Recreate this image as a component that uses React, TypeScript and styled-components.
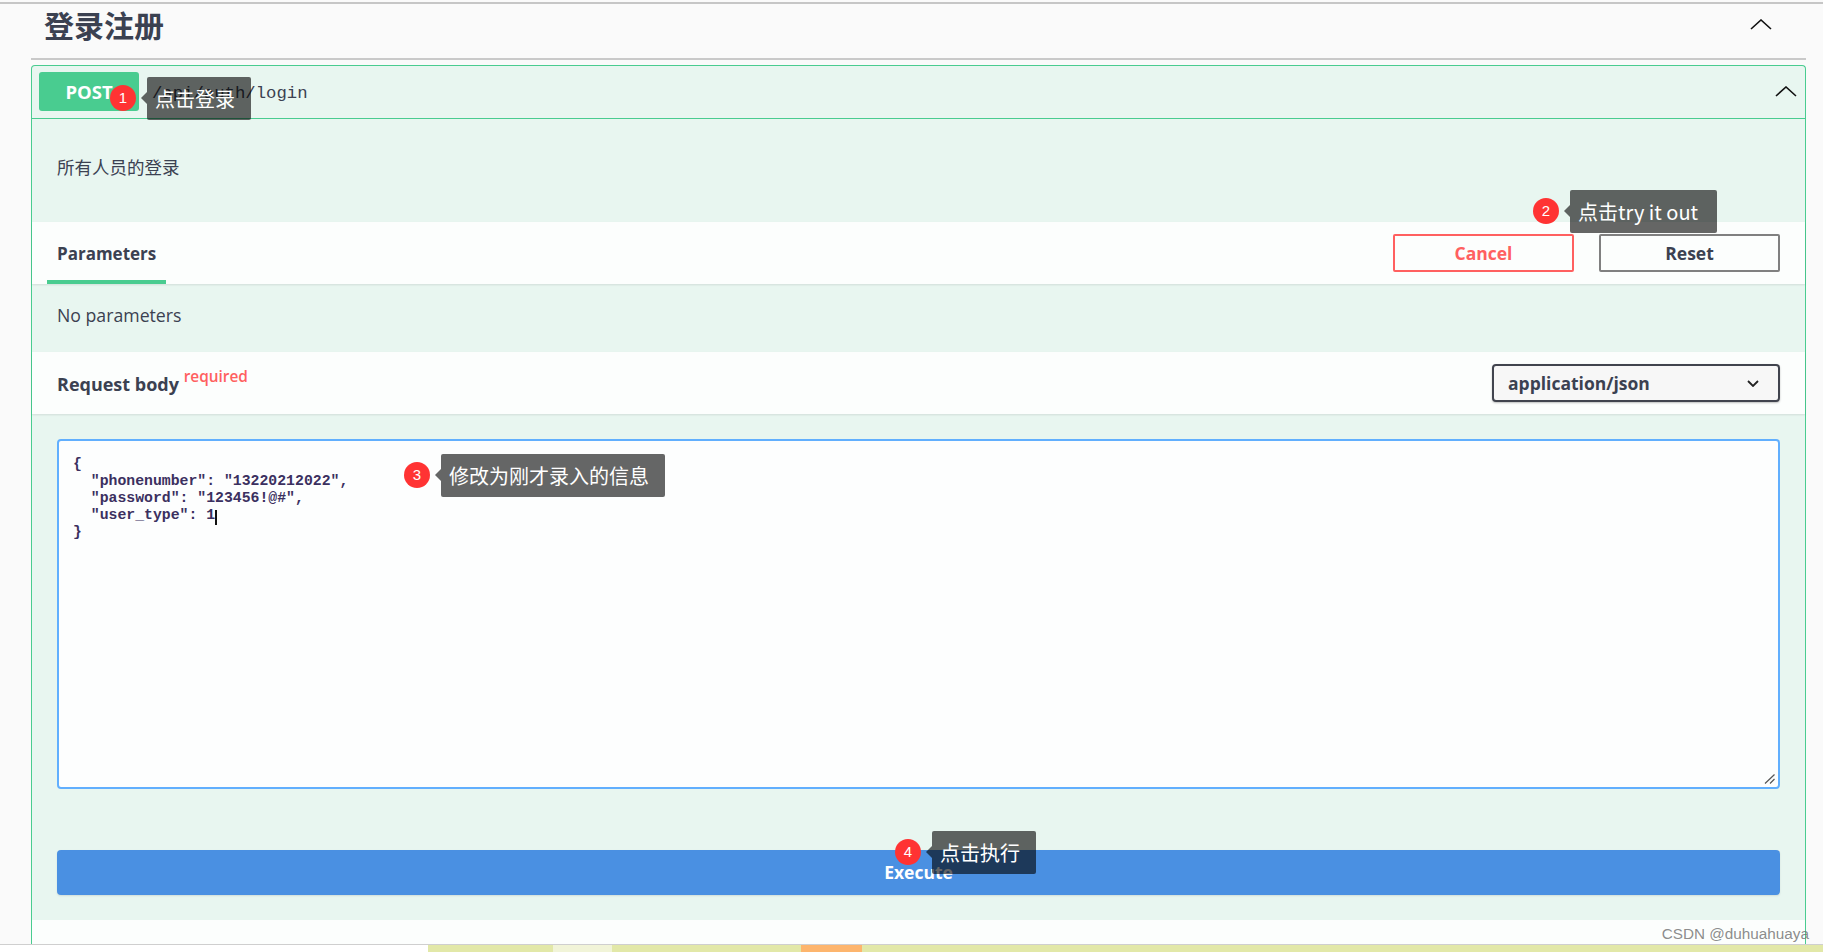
import styled, { createGlobalStyle } from 'styled-components';

const GlobalStyle = createGlobalStyle`
  html, body {
    margin: 0;
    padding: 0;
    background: #fafafa;
  }
  body {
    font-family: 'Open Sans', 'Noto Sans CJK SC', sans-serif;
    color: #3b4151;
    overflow: hidden;
  }
`;

const notes = [
  { n: 1, text: '点击登录', left: 147, top: 77, width: 104, badgeX: 123, badgeY: 98 },
  { n: 2, text: '点击try it out', left: 1570, top: 190, width: 147, badgeX: 1546, badgeY: 211 },
  { n: 3, text: '修改为刚才录入的信息', left: 441, top: 454, width: 224, badgeX: 417, badgeY: 475 },
  { n: 4, text: '点击执行', left: 932, top: 831, width: 104, badgeX: 908, badgeY: 852 },
];

const body = `{
  "phonenumber": "13220212022",
  "password": "123456!@#",
  "user_type": 1
}`;

const Chevron = ({ width, height, weight }: { width: number; height: number; weight: number }) => (
  <svg width={width} height={height} viewBox={`0 0 ${width} ${height}`} fill='none'>
    <polyline
      points={`1,${height - 1} ${width / 2},1 ${width - 1},${height - 1}`}
      stroke='#111'
      strokeWidth={weight}
    />
  </svg>
);

const App = () => {
  return (
    <Page>
      <GlobalStyle />
      <Main>
        <Section>
          <SectionTitle>登录注册</SectionTitle>
          <Chevron width={22} height={11} weight={1.6} />
        </Section>
        <Opblock>
          <Summary>
            <Method>POST</Method>
            <Path>/api/auth/login</Path>
            <Chevron width={22} height={11} weight={1.6} />
          </Summary>
          <Description>所有人员的登录</Description>
          <TabBar>
            <Tab>Parameters</Tab>
            <Actions>
              <OutlineButton $danger>Cancel</OutlineButton>
              <OutlineButton>Reset</OutlineButton>
            </Actions>
          </TabBar>
          <NoParams>No parameters</NoParams>
          <BodyBar>
            <BodyTitle>
              Request body <Required>required</Required>
            </BodyTitle>
            <MediaSelect>
              application/json
              <SelectArrow width='12' height='7' viewBox='0 0 12 7' fill='none'>
                <polyline points='1,1 6,6 11,1' stroke='#222' strokeWidth='1.8' />
              </SelectArrow>
            </MediaSelect>
          </BodyBar>
          <Editor>
            <EditorBox>
              <BodyInput readOnly spellCheck={false} defaultValue={body} />
              <Caret />
              <Grip width='11' height='10' viewBox='0 0 11 10' fill='none'>
                <path d='M1 9.5 L10.5 0.5 M6 9.5 L10.5 5' stroke='#555' strokeWidth='1.2' />
              </Grip>
            </EditorBox>
            <Execute>Execute</Execute>
          </Editor>
          <Footer />
        </Opblock>
      </Main>
      <Strip>
        <StripBlank />
        <StripPart $w={125} $color='#e2e8a8' />
        <StripPart $w={59} $color='#f1f4d8' />
        <StripPart $w={189} $color='#e2e8a8' />
        <StripPart $w={61} $color='#fdb56d' />
        <StripPart $grow $color='#e2e8a8' />
      </Strip>
      {notes.map((note) => (
        <div key={note.n}>
          <Badge $x={note.badgeX} $y={note.badgeY}>
            {note.n}
          </Badge>
          <Note $x={note.left} $y={note.top} $w={note.width}>
            {note.text}
          </Note>
        </div>
      ))}
      <Watermark>CSDN @duhuahuaya</Watermark>
    </Page>
  );
};

export default App;

const Page = styled.div`
  position: relative;
  display: flex;
  flex-direction: column;
  height: 952px;
  overflow: hidden;
  background: #fafafa;
`;

const Main = styled.div`
  flex: 1;
  min-height: 0;
  overflow: hidden;
  margin-top: 2px;
  border-top: 2px solid #c6c6c6;
  padding: 0 17px 0 31px;
`;

const Section = styled.div`
  display: flex;
  align-items: center;
  justify-content: space-between;
  box-sizing: border-box;
  height: 56px;
  padding: 0 34px 14px 13px;
  border-bottom: 2px solid #c9c9c9;
`;

const SectionTitle = styled.h3`
  margin: 0;
  padding-top: 4px;
  font-size: 30px;
  font-weight: 700;
  line-height: 36px;
  color: #3b4151;
`;

const Opblock = styled.div`
  margin-top: 5px;
  border: 1px solid #49cc90;
  border-bottom: 0;
  border-radius: 4px 4px 0 0;
  background: #e8f6f0;
  height: 900px;
`;

const Summary = styled.div`
  display: flex;
  align-items: center;
  box-sizing: border-box;
  height: 53px;
  padding: 0 8px 1px 7px;
  border-bottom: 1px solid #49cc90;
`;

const Method = styled.div`
  box-sizing: border-box;
  width: 100px;
  height: 39px;
  border-radius: 3px;
  background: #49cc90;
  color: #fff;
  font-size: 18.5px;
  font-weight: 700;
  line-height: 39px;
  text-align: center;
`;

const Path = styled.div`
  flex: 1;
  padding: 3px 0 0 13px;
  font-family: 'Liberation Mono', monospace;
  font-size: 17.3px;
  color: #3b4151;
`;

const Description = styled.div`
  box-sizing: border-box;
  height: 103px;
  padding: 35px 0 0 25px;
  font-size: 17.5px;
  line-height: 26px;
  color: #3b4151;
`;

const TabBar = styled.div`
  display: flex;
  align-items: center;
  justify-content: space-between;
  box-sizing: border-box;
  height: 62px;
  padding: 0 25px 0 15px;
  background: rgba(255, 255, 255, 0.85);
  box-shadow: 0 1px 2px rgba(0, 0, 0, 0.1);
`;

const Tab = styled.div`
  box-sizing: border-box;
  align-self: stretch;
  width: 119px;
  padding: 20px 0 0 10px;
  border-bottom: 4px solid #49cc90;
  font-size: 17px;
  font-weight: 700;
  line-height: 24px;
`;

const Actions = styled.div`
  display: flex;
  gap: 25px;
`;

const OutlineButton = styled.div<{ $danger?: boolean }>`
  box-sizing: border-box;
  width: 181px;
  height: 38px;
  border: 2px solid ${(p) => (p.$danger ? '#ff6060' : '#808080')};
  border-radius: 2px;
  color: ${(p) => (p.$danger ? '#ff6060' : '#3b4151')};
  font-size: 17.5px;
  font-weight: 700;
  line-height: 34px;
  text-align: center;
`;

const NoParams = styled.div`
  box-sizing: border-box;
  height: 68px;
  padding: 18px 0 0 25px;
  font-size: 17.7px;
  line-height: 26px;
`;

const BodyBar = styled.div`
  display: flex;
  align-items: center;
  justify-content: space-between;
  box-sizing: border-box;
  height: 62px;
  padding: 0 25px;
  background: rgba(255, 255, 255, 0.85);
  box-shadow: 0 1px 2px rgba(0, 0, 0, 0.1);
`;

const BodyTitle = styled.div`
  padding-bottom: 2px;
  font-size: 18px;
  font-weight: 700;
`;

const Required = styled.sup`
  font-size: 15.4px;
  font-weight: 600;
  line-height: 1;
  vertical-align: 9px;
  color: #ff6060;
`;

const MediaSelect = styled.div`
  display: flex;
  align-items: center;
  justify-content: space-between;
  box-sizing: border-box;
  width: 288px;
  height: 38px;
  padding: 0 19px 0 14px;
  border: 2px solid #41444e;
  border-radius: 4px;
  background: #f7f7f7;
  box-shadow: 0 1px 2px rgba(0, 0, 0, 0.25);
  font-size: 17.5px;
  font-weight: 700;
`;

const SelectArrow = styled.svg`
  display: block;
`;

const Editor = styled.div`
  box-sizing: border-box;
  height: 506px;
  padding: 25px 25px 0;
`;

const EditorBox = styled.div`
  position: relative;
`;

const BodyInput = styled.textarea`
  display: block;
  box-sizing: border-box;
  width: 100%;
  height: 350px;
  padding: 15px 14px;
  border: 2px solid #61affe;
  border-radius: 4px;
  outline: none;
  background: #fdfefe;
  color: #3b3060;
  font-family: 'Liberation Mono', monospace;
  font-size: 14.8px;
  font-weight: 700;
  line-height: 17px;
  resize: none;
`;

const Caret = styled.span`
  position: absolute;
  left: 158px;
  top: 71px;
  width: 1.5px;
  height: 15px;
  background: #111;
`;

const Grip = styled.svg`
  position: absolute;
  right: 5px;
  bottom: 5px;
`;

const Execute = styled.div`
  height: 45px;
  margin-top: 61px;
  border-radius: 4px;
  background: #4a90e2;
  box-shadow: 0 1px 2px rgba(0, 0, 0, 0.1);
  color: #fff;
  font-size: 17.5px;
  font-weight: 700;
  line-height: 45px;
  text-align: center;
`;

const Footer = styled.div`
  height: 40px;
  background: #fcfefd;
`;

const Strip = styled.div`
  display: flex;
  height: 8px;
  border-top: 1px solid #cfcfcf;
  box-sizing: border-box;
`;

const StripBlank = styled.div`
  width: 428px;
  background: #fff;
`;

const StripPart = styled.div<{ $w?: number; $grow?: boolean; $color: string }>`
  width: ${(p) => (p.$w ? `${p.$w}px` : 'auto')};
  flex: ${(p) => (p.$grow ? 1 : 'none')};
  background: ${(p) => p.$color};
`;

const Badge = styled.div<{ $x: number; $y: number }>`
  position: absolute;
  left: ${(p) => p.$x - 13}px;
  top: ${(p) => p.$y - 13}px;
  width: 26px;
  height: 26px;
  border-radius: 50%;
  background: #ff3333;
  color: #fff;
  font-family: 'Liberation Sans', sans-serif;
  font-size: 15px;
  line-height: 26px;
  text-align: center;
`;

const Note = styled.div<{ $x: number; $y: number; $w: number }>`
  position: absolute;
  left: ${(p) => p.$x}px;
  top: ${(p) => p.$y}px;
  box-sizing: border-box;
  width: ${(p) => p.$w}px;
  height: 43px;
  padding-left: 8px;
  border-radius: 2px;
  background: rgba(0, 0, 0, 0.6);
  color: #fff;
  font-family: 'Noto Sans CJK SC', 'Open Sans', sans-serif;
  font-size: 20px;
  line-height: 43px;
  white-space: nowrap;

  &::before {
    content: '';
    position: absolute;
    left: -6px;
    top: 15px;
    border: 6px solid transparent;
    border-left: 0;
    border-right-color: rgba(0, 0, 0, 0.6);
  }
`;

const Watermark = styled.div`
  position: absolute;
  right: 14px;
  top: 925px;
  color: rgba(110, 110, 110, 0.8);
  font-family: 'Liberation Sans', sans-serif;
  font-size: 15.3px;
  line-height: 18px;
`;
